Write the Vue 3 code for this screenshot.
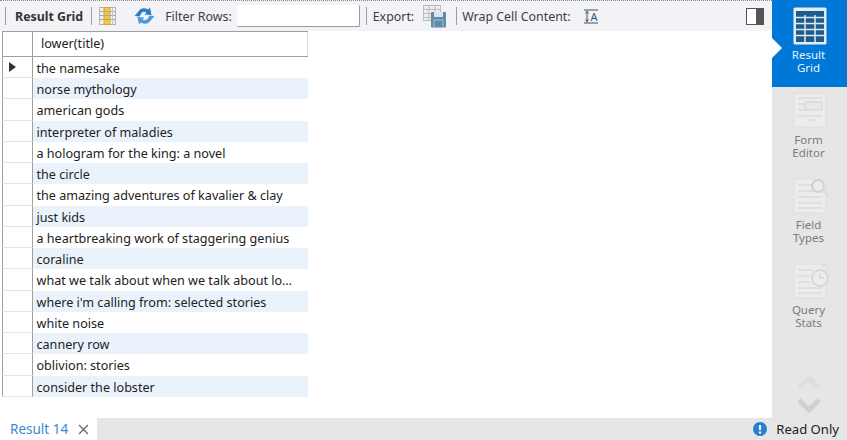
<script setup>
const titles = ['the namesake','norse mythology','american gods','interpreter of maladies','a hologram for the king: a novel','the circle','the amazing adventures of kavalier & clay','just kids','a heartbreaking work of staggering genius','coraline','what we talk about when we talk about lo…','where i\'m calling from: selected stories','white noise','cannery row','oblivion: stories','consider the lobster']
</script>

<template>
  <div class="app">
    <div class="body">
      <div class="main">
        <div class="toolbar">
          <span class="sep first"></span>
          <b class="title">Result Grid</b>
          <span class="sep s1"></span>
          <svg class="ic grid-ic" width="17" height="18" viewBox="0 0 17 18">
            <rect x="0.500" y="0.500" width="16" height="17" fill="#f0f0f0" stroke="#b4b4b4"/>
            <rect x="5" y="0.500" width="6" height="17" fill="#f4c63e" stroke="#d9a62a"/>
            <path d="M0.500 4.500h16M0.500 8.500h16M0.500 12.500h16" stroke="#a8a8a8" fill="none"/>
            <path d="M13.500 1v16" stroke="#c4c4c4" fill="none"/>
          </svg>
          <svg class="ic refresh" width="21" height="18" viewBox="0 0 21 18">
            <path d="M0.500 9 L6 2.500 Q10 0 14 2.500 L16 0.500 L17.500 8 L10.500 7.500 L12.500 5.500 Q9.500 4 7.500 6 L5.500 9.500 Z" fill="#2b7cc4"/>
            <path d="M20.500 9 L15 15.500 Q11 18 7 15.500 L5 17.500 L3.500 10 L10.500 10.500 L8.500 12.500 Q11.500 14 13.500 12 L15.500 8.500 Z" fill="#4a9ae0"/>
          </svg>
          <span class="lbl filter-lbl">Filter Rows:</span>
          <span class="filter"></span>
          <span class="sep s2"></span>
          <span class="lbl">Export:</span>
          <svg class="ic export" width="23" height="23" viewBox="0 0 23 23">
            <rect x="0.500" y="0.500" width="17" height="15" fill="#eee" stroke="#bcbcbc"/>
            <path d="M0.500 4.500h17M0.500 8.500h17M0.500 12.500h17M6 0.500v15M12 0.500v15" stroke="#bcbcbc" fill="none"/>
            <rect x="8" y="7" width="15" height="15.500" rx="1" fill="#5d8cab"/>
            <rect x="11" y="7" width="9" height="5" fill="#dce5eb"/>
            <rect x="11" y="15" width="9" height="7.500" fill="#5d8cab" stroke="#a9c2d2"/>
          </svg>
          <span class="sep s3"></span>
          <span class="lbl">Wrap Cell Content:</span>
          <svg class="ic wrap" width="15" height="15" viewBox="0 0 15 15">
            <path d="M0 1h14M0 14h14" stroke="#33536b"/>
            <path d="M3 2v11M1.300 4.500 3 2.500 4.700 4.500M1.300 10.500 3 12.500 4.700 10.500" stroke="#33536b" fill="none"/>
            <text x="6.500" y="12" class="wrap-a">A</text>
          </svg>
          <span class="spacer"></span>
          <span class="panel-toggle"></span>
        </div>
        <div class="grid">
          <div class="head">
            <span class="corner"></span>
            <span class="col">lower(title)</span>
          </div>
          <div v-for="(t, i) in titles" :key="t" class="row">
            <span class="marker"><i v-if="i === 0"></i></span>
            <span class="cell" :class="{ odd: i % 2 === 1 }">{{ t }}</span>
          </div>
        </div>
      </div>
      <aside class="side">
        <div class="tab active">
          <svg width="34" height="38" viewBox="0 0 34 38">
            <rect x="0.500" y="0.500" width="33" height="37" rx="1.500" fill="#e6ecf2"/>
            <rect x="3" y="4" width="28" height="31" fill="#1c5c8f"/>
            <path d="M3 10.500h28M3 16.500h28M3 22.500h28M3 28.500h28M12 8v27M22 8v27" stroke="#dfe9f1" stroke-width="1.500" fill="none"/>
          </svg>
          <span>Result<br>Grid</span>
          <i class="notch"></i>
        </div>
        <div class="tab">
          <svg width="34" height="36" viewBox="0 0 34 36">
            <rect x="1" y="1" width="32" height="34" fill="#ececec" stroke="#dedede"/>
            <path d="M5 6h24M5 12h7M5 18h7M5 24h24M14 28h8" stroke="#d2d2d2" fill="none"/>
            <rect x="12" y="10" width="17" height="8" fill="#e8e8e8" stroke="#d2d2d2"/>
          </svg>
          <span>Form<br>Editor</span>
        </div>
        <div class="tab">
          <svg width="40" height="36" viewBox="0 0 40 36">
            <rect x="1" y="1" width="32" height="34" fill="#ececec" stroke="#dedede"/>
            <path d="M5 7h16M5 13h16M5 19h24M5 25h24M5 30h24" stroke="#d2d2d2" fill="none"/>
            <circle cx="25" cy="8" r="6" fill="#ececec" stroke="#d0d0d0" stroke-width="2"/>
            <path d="M30 13l6 5" stroke="#dedede" stroke-width="3"/>
          </svg>
          <span>Field<br>Types</span>
        </div>
        <div class="tab last">
          <svg width="40" height="36" viewBox="0 0 40 36">
            <rect x="1" y="1" width="32" height="34" fill="#ececec" stroke="#dedede"/>
            <path d="M5 7h16M5 13h12M5 19h12M5 25h24M5 30h24" stroke="#d2d2d2" fill="none"/>
            <circle cx="27" cy="15" r="8" fill="#ececec" stroke="#d6d6d6" stroke-width="2"/>
            <path d="M27 10v5h4" stroke="#d0d0d0" fill="none"/>
            <rect x="29" y="1" width="5" height="3" fill="#dedede"/>
          </svg>
          <span>Query<br>Stats</span>
        </div>
        <div class="spacer"></div>
        <svg class="arrows" width="24" height="38" viewBox="0 0 24 38">
          <path d="M2 13 12 3 22 13" stroke="#dedede" stroke-width="5" fill="none"/>
          <path d="M2 25 12 35 22 25" stroke="#d0d0d0" stroke-width="5" fill="none"/>
        </svg>
      </aside>
    </div>
    <div class="status">
      <div class="result-tab">
        <span>Result 14</span>
        <svg width="11" height="11" viewBox="0 0 11 11"><path d="M1 1l9 9M10 1l-9 9" stroke="#666" stroke-width="1.300"/></svg>
      </div>
      <div class="spacer"></div>
      <svg class="info" width="14" height="14" viewBox="0 0 14 14">
        <circle cx="7" cy="7" r="7" fill="#2a7fd0"/>
        <path d="M7 3v5" stroke="#fff" stroke-width="2.200"/><circle cx="7" cy="10.500" r="1.200" fill="#fff"/>
      </svg>
      <span class="ro">Read Only</span>
    </div>
  </div>
</template>

<style>
html, body { margin: 0; background: #fff; }
</style>

<style scoped>
.app {
  width: 847px; height: 440px; display: flex; flex-direction: column; overflow: hidden;
  font-family: "Noto Sans", "Open Sans", sans-serif; font-size: 12.6px; color: #222; background: #fff;
}
.body { flex: 1; display: flex; min-height: 0; }
.main { flex: 1; min-width: 0; display: flex; flex-direction: column; }
.toolbar {
  height: 31px; box-sizing: border-box; display: flex; align-items: center;
  background: #f3f3f7; border-top: 1px dotted #888; padding: 0 8px 0 5px; flex: none;
}
.sep { width: 1px; height: 18px; background: #8fa0ae; flex: none; }
.title { font-size: 12.400px; font-weight: 700; margin-left: 9px; color: #333; }
.s1 { margin-left: 8px; }
.ic { flex: none; }
.grid-ic { margin-left: 7px; }
.refresh { margin-left: 18px; }
.lbl { font-size: 12.400px; color: #3c3c46; white-space: nowrap; }
.filter-lbl { margin-left: 10px; }
.filter { width: 123px; height: 22px; margin-left: 5px; background: #fff; border-right: 1px solid #9a9a9a; border-bottom: 1px solid #9a9a9a; box-sizing: border-box; border-radius: 2px; flex: none; }
.s2 { margin-left: 6px; margin-right: 6px; }
.export { margin-left: 9px; }
.s3 { margin-left: 10px; margin-right: 5px; }
.wrap { margin-left: 13px; }
.wrap-a { font-size: 11px; fill: #33536b; font-family: "Noto Sans", sans-serif; }
.spacer { flex: 1; }
.panel-toggle { width: 18px; height: 17px; border: 1px solid #555; box-sizing: border-box; background: linear-gradient(90deg, #fff 0 55%, #555 55%); display: block; }
.grid { width: 308px; padding-left: 2px; box-sizing: border-box; }
.head { display: flex; height: 26px; border-top: 1px solid #a0a0a0; border-bottom: 1px solid #a0a0a0; box-sizing: border-box; }
.corner { border-left: 1px solid #a0a0a0; border-right: 1px solid #a0a0a0; box-sizing: border-box; flex: none; width: 31px; }
.col { flex: 1; padding-left: 8px; line-height: 24px; border-right: 1px solid #ddd; }
.row { display: flex; height: 21.240px; }
.marker { width: 31px; flex: none; box-sizing: border-box; border-left: 1px solid #a0a0a0; border-right: 1px solid #a0a0a0; border-bottom: 1px solid #e4e4e4; display: flex; align-items: center; padding-left: 6px; }
.marker i { width: 0; height: 0; border-left: 7px solid #333; border-top: 5px solid transparent; border-bottom: 5px solid transparent; }
.cell { flex: 1; min-width: 0; padding: 1px 0 0 3.500px; line-height: 21px; white-space: nowrap; box-sizing: border-box; height: 21.240px; }
.cell.odd { background: #eaf2fc; }
.side { width: 75px; flex: none; background: #e6e6e6; display: flex; flex-direction: column; align-items: center; }
.tab { width: 100%; height: 85.500px; display: flex; flex-direction: column; box-sizing: border-box; padding-top: 6.500px; color: #7b7b7b; font-size: 11.500px; line-height: 13.400px; text-align: center; position: relative; flex: none; }
.tab span { margin: 4.500px 2px 0 0; }
.tab.last span { margin-top: 3.500px; }
.tab svg { margin-left: 21px; flex: none; }
.tab.active { background: #0078d7; color: #e8f3fc; height: 87px; margin-bottom: -1.500px; }
.tab.active span { margin-top: 3.500px; }
.notch { position: absolute; left: 0; top: 38px; width: 0; height: 0; border-left: 10px solid #fff; border-top: 10px solid transparent; border-bottom: 10px solid transparent; }
.arrows { margin: 0 2px 5px 0; flex: none; }
.status { height: 22px; flex: none; display: flex; align-items: center; background: #e6e6e6; }
.result-tab { width: 97px; height: 100%; box-sizing: border-box; background: #fff; display: flex; align-items: center; padding-left: 10px; gap: 10px; color: #3a88d6; font-size: 13.500px; flex: none; }
.info { margin-right: 9px; }
.ro { margin-right: 8px; font-size: 13.100px; color: #222; }
</style>
